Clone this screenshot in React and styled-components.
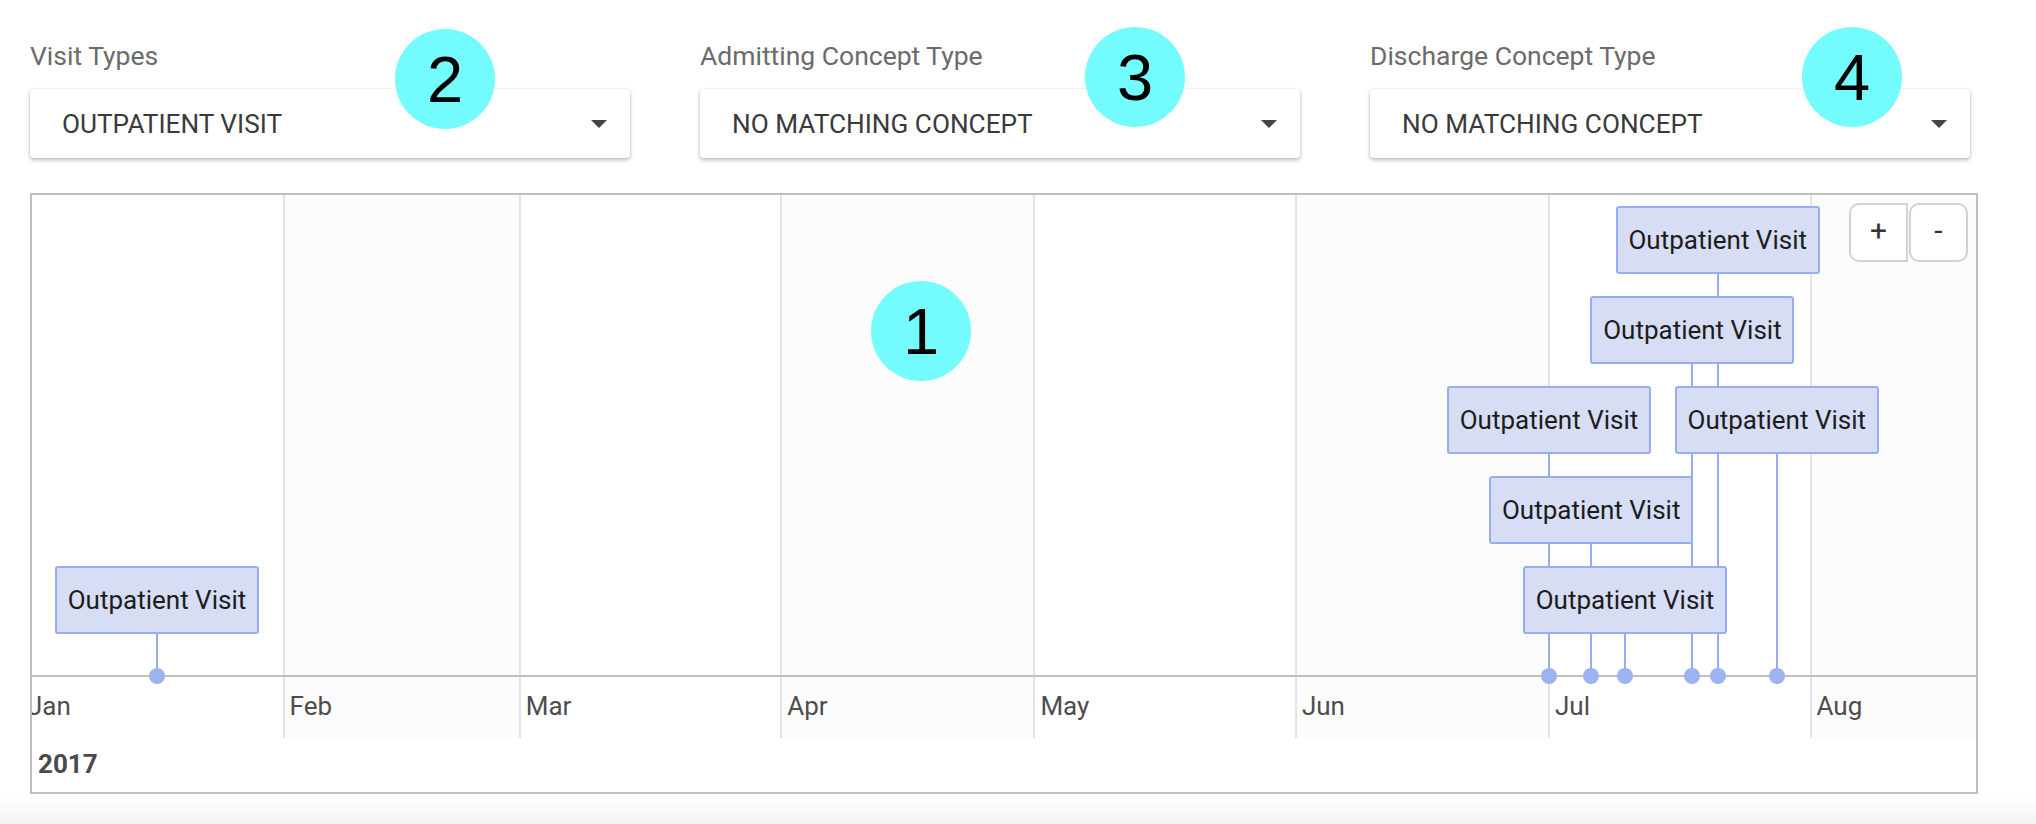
import React from 'react';
import styled, { createGlobalStyle } from 'styled-components';

const GlobalStyle = createGlobalStyle`
  html, body { margin: 0; padding: 0; }
  body {
    min-height: 824px;
    background: linear-gradient(to bottom, #ffffff 0, #ffffff 796px, #f4f4f4 824px);
    font-family: Roboto, "Noto Sans", Arial, sans-serif;
  }
`;

const PPD = 8.4365;
const ORIGIN = -10;
const xOf = (d) => ORIGIN + d * PPD;

const months = [
  { name: 'Jan', days: 31 },
  { name: 'Feb', days: 28 },
  { name: 'Mar', days: 31 },
  { name: 'Apr', days: 30 },
  { name: 'May', days: 31 },
  { name: 'Jun', days: 30 },
  { name: 'Jul', days: 31 },
  { name: 'Aug', days: 31 },
];

const visits = [
  { day: 16, row: 4 },
  { day: 181, row: 2 },
  { day: 186, row: 3 },
  { day: 190, row: 4 },
  { day: 198, row: 1 },
  { day: 201, row: 0 },
  { day: 208, row: 2 },
];

const AXIS_Y = 481;
const ROW_TOP = 11;
const ROW_PITCH = 90;
const BOX_W = 204;
const BOX_H = 68;

const Page = styled.main`
  position: relative;
  padding: 41px 58px 0 30px;
`;

const FilterRow = styled.div`
  display: grid;
  grid-template-columns: repeat(3, 600px);
  column-gap: 70px;
`;

const FilterField = styled.div`
  display: flex;
  flex-direction: column;
`;

const FieldLabel = styled.label`
  font-size: 26.5px;
  line-height: 30px;
  color: #6b6b6b;
  margin-bottom: 18px;
`;

const SelectBox = styled.div`
  height: 69px;
  box-sizing: border-box;
  display: flex;
  align-items: center;
  justify-content: space-between;
  padding: 0 23px 0 32px;
  background: #fff;
  border-radius: 4px;
  box-shadow: 0 2px 4px rgba(0, 0, 0, 0.26), 0 0 2px rgba(0, 0, 0, 0.12);
  font-size: 26.2px;
  color: #3a3a3a;
  text-transform: uppercase;
`;

const Caret = styled.span`
  width: 0;
  height: 0;
  border-left: 8px solid transparent;
  border-right: 8px solid transparent;
  border-top: 8px solid #444;
`;

const Timeline = styled.section`
  position: relative;
  margin-top: 35px;
  height: 601px;
  box-sizing: border-box;
  border: 2px solid #bfbfbf;
  display: flex;
  flex-direction: column;
  background: #fff;
`;

const Canvas = styled.div`
  position: relative;
  height: 543px;
  flex: none;
  overflow: hidden;
`;

const MonthStrip = styled.div`
  display: flex;
  height: 100%;
  margin-left: ${ORIGIN - 1}px;
`;

const MonthColumn = styled.div`
  flex: none;
  height: 100%;
  box-sizing: border-box;
  border-left: 2px solid #e3e3e3;
  background: ${(p) => (p.$shaded ? '#fcfcfc' : '#ffffff')};
  display: flex;
  flex-direction: column;
  justify-content: flex-end;
`;

const MonthLabel = styled.div`
  height: 61px;
  box-sizing: border-box;
  padding: 14px 0 0 5px;
  font-size: 26px;
  line-height: 30px;
  color: #4d4d4d;
  white-space: nowrap;
`;

const ItemLayer = styled.div`
  position: absolute;
  left: 0;
  right: 0;
  top: 0;
  height: 480px;
  border-bottom: 2px solid #bfbfbf;
`;

const Stem = styled.div`
  position: absolute;
  width: 2px;
  background: #97adf2;
`;

const VisitBox = styled.div`
  position: absolute;
  width: ${BOX_W}px;
  height: ${BOX_H}px;
  box-sizing: border-box;
  border: 2px solid #97adf2;
  border-radius: 3px;
  background: #d7ddf4;
  display: flex;
  align-items: center;
  justify-content: center;
  font-size: 26px;
  color: #1c1c1c;
  white-space: nowrap;
`;

const AxisDot = styled.div`
  position: absolute;
  width: 16px;
  height: 16px;
  border-radius: 50%;
  background: #9db2f1;
`;

const YearBar = styled.div`
  flex: 1;
  padding: 11px 0 0 6px;
  font-size: 26px;
  line-height: 30px;
  font-weight: 700;
  color: #4a4a4a;
`;

const ZoomControls = styled.div`
  position: absolute;
  top: 8px;
  right: 8px;
  display: flex;
  gap: 1px;
`;

const ZoomButton = styled.button`
  width: 59px;
  height: 59px;
  box-sizing: border-box;
  padding: 0 0 4px;
  border: 2px solid #d2d2d2;
  border-radius: ${(p) => (p.$first ? '10px 0 0 10px' : '10px')};
  background: #fff;
  font-family: Roboto, Arial, sans-serif;
  font-size: 30px;
  line-height: 1;
  color: #333;
  display: flex;
  align-items: center;
  justify-content: center;
`;

const Badge = styled.div`
  position: absolute;
  width: 100px;
  height: 100px;
  border-radius: 50%;
  background: #74fbfd;
  display: flex;
  align-items: center;
  justify-content: center;
  font-family: "Liberation Sans", Arial, sans-serif;
  font-size: 65px;
  line-height: 1;
  color: #000;
`;

const filters = [
  { label: 'Visit Types', value: 'Outpatient Visit' },
  { label: 'Admitting Concept Type', value: 'No matching concept' },
  { label: 'Discharge Concept Type', value: 'No matching concept' },
];

const badges = [
  { n: 1, cx: 921, cy: 331 },
  { n: 2, cx: 445, cy: 79 },
  { n: 3, cx: 1135, cy: 77 },
  { n: 4, cx: 1852, cy: 77 },
];

export default function App() {
  return (
    <>
      <GlobalStyle />
      <Page>
        <FilterRow>
          {filters.map((f) => (
            <FilterField key={f.label}>
              <FieldLabel>{f.label}</FieldLabel>
              <SelectBox>
                <span>{f.value}</span>
                <Caret />
              </SelectBox>
            </FilterField>
          ))}
        </FilterRow>

        <Timeline>
          <Canvas>
            <MonthStrip>
              {months.map((m, i) => (
                <MonthColumn key={m.name} $shaded={i % 2 === 1} style={{ width: m.days * PPD }}>
                  <MonthLabel>{m.name}</MonthLabel>
                </MonthColumn>
              ))}
            </MonthStrip>
            <ItemLayer>
              {visits.map((v) => {
                const top = ROW_TOP + v.row * ROW_PITCH;
                return (
                  <Stem
                    key={'s' + v.day}
                    style={{ left: xOf(v.day) - 1, top: top + 10, height: AXIS_Y - top - 10 }}
                  />
                );
              })}
              {visits.map((v) => (
                <VisitBox
                  key={'b' + v.day}
                  style={{ left: xOf(v.day) - BOX_W / 2, top: ROW_TOP + v.row * ROW_PITCH }}
                >
                  Outpatient Visit
                </VisitBox>
              ))}
              {visits.map((v) => (
                <AxisDot key={'d' + v.day} style={{ left: xOf(v.day) - 8, top: AXIS_Y - 8 }} />
              ))}
            </ItemLayer>
          </Canvas>
          <YearBar>2017</YearBar>
          <ZoomControls>
            <ZoomButton $first>+</ZoomButton>
            <ZoomButton>-</ZoomButton>
          </ZoomControls>
        </Timeline>

        {badges.map((b) => (
          <Badge key={b.n} style={{ left: b.cx - 50, top: b.cy - 50 }}>
            {b.n}
          </Badge>
        ))}
      </Page>
    </>
  );
}
